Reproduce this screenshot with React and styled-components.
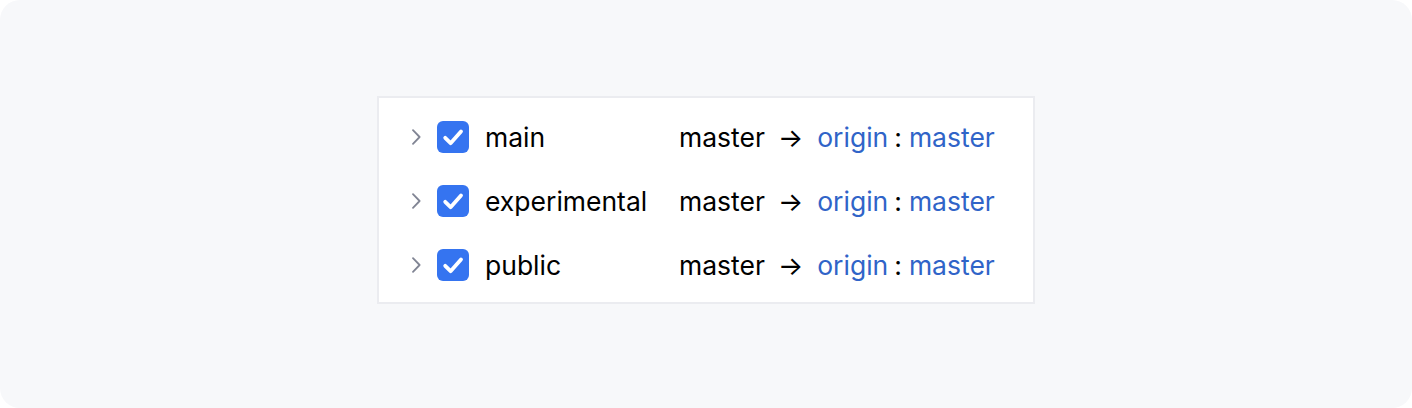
import React from 'react'
import styled, { createGlobalStyle } from 'styled-components'

const GlobalStyle = createGlobalStyle`
  html, body {
    margin: 0;
    padding: 0;
    background: #ffffff;
  }
  body {
    font-family: Inter, "Noto Sans", sans-serif;
  }
`

const branches = [
  { name: 'main', local: 'master', remote: 'origin', target: 'master' },
  { name: 'experimental', local: 'master', remote: 'origin', target: 'master' },
  { name: 'public', local: 'master', remote: 'origin', target: 'master' },
]

function Chevron() {
  return (
    <ChevronIcon viewBox="0 0 12 16" width="12" height="16">
      <path d="M3 1.2 L9.6 8 L3 14.8" fill="none" stroke="#818594" strokeWidth="1.8" strokeLinecap="round" strokeLinejoin="round" />
    </ChevronIcon>
  )
}

function CheckBox() {
  return (
    <Box>
      <svg viewBox="0 0 32 32" width="32" height="32">
        <path d="M8.2 16.8 L13.6 22.2 L24 10.4" fill="none" stroke="#ffffff" strokeWidth="3.8" strokeLinecap="round" strokeLinejoin="round" />
      </svg>
    </Box>
  )
}

function App() {
  return (
    <>
      <GlobalStyle />
      <Canvas>
        <Panel>
          {branches.map((b) => (
            <Row key={b.name}>
              <Chevron />
              <CheckBox />
              <Name>{b.name}</Name>
              <Local>{b.local}</Local>
              <Arrow>→</Arrow>
              <Remote>{b.remote}</Remote>
              <Colon>:</Colon>
              <Remote>{b.target}</Remote>
            </Row>
          ))}
        </Panel>
      </Canvas>
    </>
  )
}

const Canvas = styled.div`
  width: 1412px;
  height: 408px;
  box-sizing: border-box;
  background: #f7f8fa;
  border-radius: 20px;
  display: flex;
  align-items: center;
  justify-content: center;
  padding-bottom: 8px;
`

const Panel = styled.div`
  width: 658px;
  box-sizing: border-box;
  background: #ffffff;
  border: 2px solid #ebecf0;
  padding: 7px 0 5px 31px;
  display: flex;
  flex-direction: column;
`

const Row = styled.div`
  height: 64px;
  display: flex;
  align-items: center;
  font-size: 26.5px;
  color: #000000;
`

const ChevronIcon = styled.svg`
  flex-shrink: 0;
  margin-right: 15px;
`

const Box = styled.div`
  width: 32px;
  height: 32px;
  border-radius: 6px;
  background: #3574f0;
  flex-shrink: 0;
  display: flex;
  margin-right: 16px;
`

const Name = styled.span`
  width: 194px;
`

const Local = styled.span``

const Arrow = styled.span`
  margin: 0 14px 0 13px;
`

const Remote = styled.span`
  color: #3064c8;
`

const Colon = styled.span`
  margin: 0 7px 0 6px;
`

export default App
